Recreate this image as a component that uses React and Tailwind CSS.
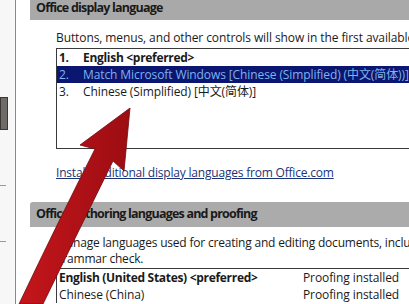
export default function App() {
    const font = { fontFamily: '"Open Sans", "Noto Sans CJK SC", sans-serif' };

    return (
        <div
            className="relative w-full h-screen overflow-hidden bg-white text-[12px] text-[#1a1a1a] flex"
            style={font}
        >
            {/* Left navigation strip */}
            <div className="w-[16px] shrink-0 border-r border-[#8a8a8a] bg-[#f7f7f7] flex flex-col">
                <div className="h-[97px]" />
                <div className="h-[33px] w-[8px] bg-[#6f6b66] border border-[#3a3734]" />
                <div className="h-[55px]" />
                <div className="h-px w-[6px] bg-[#9a9a9a]" />
                <div className="h-[55px]" />
                <div className="h-px w-[6px] bg-[#9a9a9a]" />
            </div>

            {/* Main panel */}
            <div className="w-[393px] shrink-0 overflow-hidden pl-[14px] flex flex-col">
                {/* Section 1 header */}
                <div className="h-[20px] shrink-0 bg-[#a9a9a9] pl-[6px] font-bold text-[12.5px] leading-[16px] tracking-[-0.8px] whitespace-nowrap">
                    Office display language
                </div>

                <div className="pl-[26px] flex flex-col">
                    <div className="mt-[9px] h-[18px] leading-[18px] whitespace-nowrap overflow-hidden tracking-[-0.1px]">
                        Buttons, menus, and other controls will show in the first available la
                    </div>

                    {/* Display language list */}
                    <div className="mt-[1px] h-[101px] border-t border-l border-b border-[#3a3a3a] flex flex-col whitespace-nowrap">
                        <div className="h-[17px] leading-[17px] flex font-bold tracking-[-0.3px]">
                            <span className="w-[26px] pl-[2px]">1.</span>
                            <span>English &lt;preferred&gt;</span>
                        </div>
                        <div className="h-[17px] leading-[17px] flex bg-[#0b1670] text-[#7fb2ee] tracking-[-0.1px]">
                            <span className="w-[26px] pl-[2px]">2.</span>
                            <span>Match Microsoft Windows [Chinese (Simplified) (中文(简体))]</span>
                        </div>
                        <div className="h-[17px] leading-[17px] flex tracking-[-0.1px]">
                            <span className="w-[26px] pl-[2px]">3.</span>
                            <span>Chinese (Simplified) [中文(简体)]</span>
                        </div>
                    </div>

                    <div className="mt-[15px] h-[18px] leading-[18px] whitespace-nowrap text-[#1b3478] underline tracking-[-0.2px]">
                        Install additional display languages from Office.com
                    </div>
                </div>

                {/* Section 2 header */}
                <div className="mt-[20px] h-[25px] shrink-0 bg-[#ababab] rounded-tl-[3px] pl-[6px] font-bold text-[12.5px] leading-[24px] tracking-[-0.8px] whitespace-nowrap">
                    Office authoring languages and proofing
                </div>

                <div className="pl-[26px] flex flex-col">
                    <div className="mt-[8px] leading-[16px] whitespace-nowrap overflow-hidden tracking-[-0.2px]">
                        <div>Manage languages used for creating and editing documents, inclu</div>
                        <div>grammar check.</div>
                    </div>

                    <div className="mt-[1px] border-t border-l border-[#3a3a3a] flex flex-col whitespace-nowrap">
                        <div className="h-[17px] leading-[17px] flex tracking-[-0.3px]">
                            <span className="w-[246px] pl-[2px] font-bold">English (United States) &lt;preferred&gt;</span>
                            <span className="tracking-[-0.1px]">Proofing installed</span>
                        </div>
                        <div className="h-[17px] leading-[17px] flex tracking-[-0.1px]">
                            <span className="w-[246px] pl-[2px]">Chinese (China)</span>
                            <span>Proofing installed</span>
                        </div>
                    </div>
                </div>
            </div>

            {/* Red annotation arrow */}
            <svg className="absolute inset-0 pointer-events-none" width="409" height="304" viewBox="0 0 409 304">
                <defs>
                    <linearGradient id="arrowRed" x1="0" y1="0" x2="1" y2="0">
                        <stop offset="0" stopColor="#c4161c" />
                        <stop offset="1" stopColor="#9c0d12" />
                    </linearGradient>
                </defs>
                <path
                    d="M130 108 L124 171 L113 161 Q80 228 43 304 L19 304 Q58 222 95 149 L80 145 Z"
                    fill="url(#arrowRed)"
                    stroke="#6e0a0d"
                    strokeWidth="0.8"
                />
            </svg>
        </div>
    );
}
